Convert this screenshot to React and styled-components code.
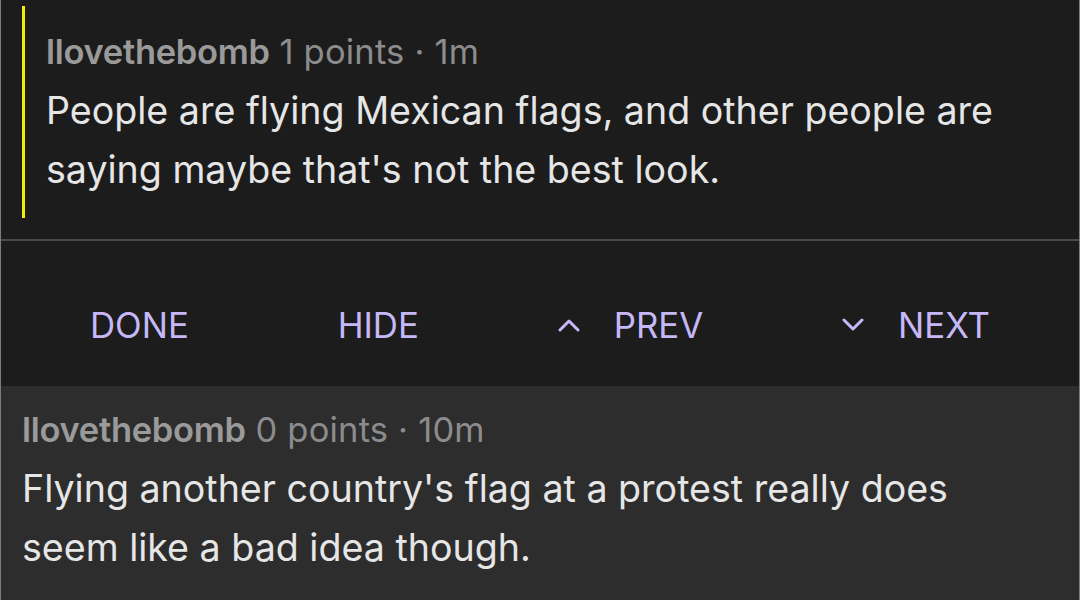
import React from "react";
import styled, { createGlobalStyle } from "styled-components";

const Global = createGlobalStyle`
  html, body {
    margin: 0;
    padding: 0;
    background: #2d2d2d;
  }
  body {
    font-family: Inter, "Noto Sans", "Liberation Sans", sans-serif;
    -webkit-font-smoothing: antialiased;
  }
`;

const Screen = styled.div`
  width: 1080px;
  height: 600px;
  overflow: hidden;
  box-sizing: border-box;
  border-left: 1px solid #7c7c7c;
  border-right: 1px solid #7c7c7c;
  display: flex;
  flex-direction: column;
`;

const Focused = styled.div`
  background: #1c1c1c;
  padding: 6px 0 21px 21px;
  border-bottom: 2px solid #4a4a4a;
`;

const Quote = styled.div`
  border-left: 3px solid #f2ec00;
  padding: 16px 0 19px 21px;
`;

const Meta = styled.div`
  font-size: 34.5px;
  line-height: 59px;
  color: #8c8c8c;
  white-space: nowrap;

  b {
    font-weight: 600;
    color: #9a9a9a;
    letter-spacing: -0.3px;
  }

  span {
    letter-spacing: 0.2px;
  }
`;

const Body = styled.div`
  font-size: 37.6px;
  line-height: 59px;
  color: #e6e6e6;
  width: ${(p) => p.$width}px;
`;

const Toolbar = styled.div`
  background: #1c1c1c;
  height: 145px;
  display: flex;
  align-items: center;
  justify-content: space-between;
  padding: 22px 89px 0 89px;
  box-sizing: border-box;
`;

const Action = styled.button`
  background: none;
  border: 0;
  padding: 0;
  margin-left: ${(p) => p.$shift || 0}px;
  display: flex;
  align-items: center;
  gap: 34px;
  font-family: inherit;
  font-size: 34.8px;
  line-height: 40px;
  color: #c6b8f6;
  cursor: pointer;

  svg {
    flex: none;
  }
`;

const Reply = styled.div`
  flex: 1;
  background: #2d2d2d;
  padding: 14px 0 0 21px;
`;

const Chevron = ({ up }) => (
  <svg width="22" height="14" viewBox="0 0 22 14">
    <path
      d={up ? "M2 12 L11 3 L20 12" : "M2 2 L11 11 L20 2"}
      fill="none"
      stroke="#c6b8f6"
      strokeWidth="3"
      strokeLinecap="round"
      strokeLinejoin="round"
    />
  </svg>
);

export default function App() {
  return (
    <>
      <Global />
      <Screen>
        <Focused>
          <Quote>
            <Meta>
              <b>llovethebomb</b> <span>1 points · 1m</span>
            </Meta>
            <Body $width={990}>
              People are flying Mexican flags, and other people are saying maybe
              that's not the best look.
            </Body>
          </Quote>
        </Focused>
        <Toolbar>
          <Action>DONE</Action>
          <Action $shift={10}>HIDE</Action>
          <Action>
            <Chevron up />
            PREV
          </Action>
          <Action>
            <Chevron />
            NEXT
          </Action>
        </Toolbar>
        <Reply>
          <Meta>
            <b>llovethebomb</b> <span>0 points · 10m</span>
          </Meta>
          <Body $width={980}>
            Flying another country's flag at a protest really does seem like a
            bad idea though.
          </Body>
        </Reply>
      </Screen>
    </>
  );
}
